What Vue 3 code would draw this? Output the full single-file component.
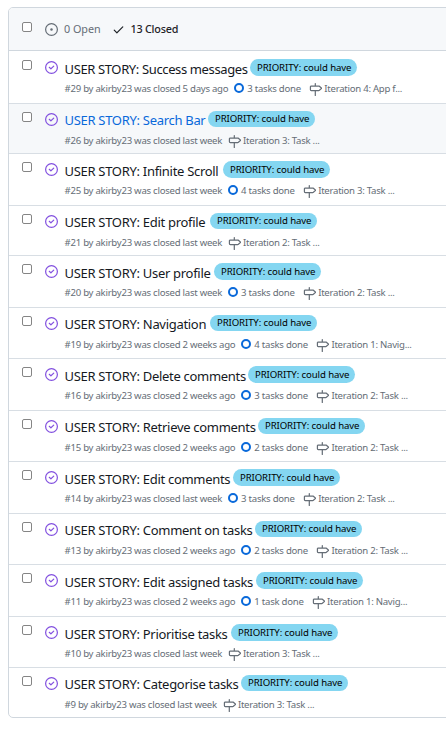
<script setup>
const mk = (id, title, titleWidth, when, tasks, iteration, height, pad) => ({ id, title, titleWidth, when, tasks, iteration, height, pad })
const issues = [
  mk(29, 'Success messages', 185.5, '5 days ago', '3 tasks', '4: App f...', 53, 2),
  mk(26, 'Search Bar', 143.5, 'last week', '', '3: Task ...', 50, 0),
  mk(25, 'Infinite Scroll', 158.5, 'last week', '4 tasks', '3: Task ...', 52, 1),
  mk(21, 'Edit profile', 145.5, 'last week', '', '2: Task ...', 50, 0),
  mk(20, 'User profile', 149.5, 'last week', '3 tasks', '2: Task ...', 52, 1),
  mk(19, 'Navigation', 145.5, '2 weeks ago', '4 tasks', '1: Navig...', 51, 0),
  mk(16, 'Delete comments', 183.5, '2 weeks ago', '3 tasks', '2: Task ...', 52, 1),
  mk(15, 'Retrieve comments', 193.5, '2 weeks ago', '2 tasks', '2: Task ...', 51, 0),
  mk(14, 'Edit comments', 168.5, 'last week', '3 tasks', '2: Task ...', 52, 1),
  mk(13, 'Comment on tasks', 190.5, '2 weeks ago', '2 tasks', '2: Task ...', 51, 0),
  mk(11, 'Edit assigned tasks', 191.5, '2 weeks ago', '1 task', '1: Navig...', 52, 1),
  mk(10, 'Prioritise tasks', 166.5, 'last week', '', '3: Task ...', 51, 1),
  mk(9, 'Categorise tasks', 176.5, 'last week', '', '3: Task ...', 50, 0),
]
</script>

<template>
  <main class="list">
    <header class="head">
      <span class="box"></span>
      <svg class="state" viewBox="0 0 16 16" fill="#656d76"><path d="M8 9.5a1.5 1.5 0 1 0 0-3 1.5 1.5 0 0 0 0 3Z"/><path d="M8 0a8 8 0 1 1 0 16A8 8 0 0 1 8 0ZM1.5 8a6.5 6.5 0 1 0 13 0 6.5 6.5 0 0 0-13 0Z"/></svg>
      <span class="open">0 Open</span>
      <svg class="check" viewBox="0 0 16 16" fill="#1f2328"><path d="M13.78 4.22a.75.75 0 0 1 0 1.06l-7.25 7.25a.75.75 0 0 1-1.06 0L2.22 9.28a.75.75 0 0 1 1.06-1.06L6 10.94l6.72-6.72a.75.75 0 0 1 1.06 0Z"/></svg>
      <span class="closed">13 Closed</span>
    </header>
    <section v-for="(i, n) in issues" :key="i.id" class="row" :class="{ hover: n === 1, tight: i.pad === 0 }" :style="{ height: i.height + 'px' }">
      <span class="box"></span>
      <svg class="state" viewBox="0 0 16 16" fill="#8250df"><path d="M11.28 6.78a.75.75 0 0 0-1.06-1.06L7.25 8.69 5.78 7.22a.75.75 0 0 0-1.06 1.06l2 2a.75.75 0 0 0 1.06 0l3.5-3.5Z"/><path d="M16 8A8 8 0 1 1 0 8a8 8 0 0 1 16 0Zm-1.5 0a6.5 6.5 0 1 0-13 0 6.5 6.5 0 0 0 13 0Z"/></svg>
      <div class="body" :style="{ paddingTop: i.pad + 'px' }">
        <div class="top">
          <span class="title" :style="{ width: i.titleWidth + 'px' }">USER STORY: {{ i.title }}</span>
          <span class="label">PRIORITY: could have</span>
        </div>
        <div class="meta">
          <span>#{{ i.id }} by akirby23 was closed {{ i.when }}</span>
          <span v-if="i.tasks" class="tasks"><i class="ring"></i>{{ i.tasks }} done</span>
          <span class="iter"><svg class="sign" viewBox="0 0 16 16" fill="#656d76"><path d="M7.75 0a.75.75 0 0 1 .75.75V3h3.634c.414 0 .814.147 1.13.414l2.07 1.75a1.75 1.75 0 0 1 0 2.672l-2.07 1.75a1.75 1.75 0 0 1-1.13.414H8.5v5.25a.75.75 0 0 1-1.5 0V10H2.75A1.75 1.75 0 0 1 1 8.25v-3.5C1 3.784 1.784 3 2.75 3H7V.75A.75.75 0 0 1 7.75 0Zm4.384 8.5a.25.25 0 0 0 .161-.06l2.07-1.75a.248.248 0 0 0 0-.38l-2.07-1.75a.25.25 0 0 0-.161-.06H2.75a.25.25 0 0 0-.25.25v3.5c0 .138.112.25.25.25h9.384Z"/></svg>Iteration {{ i.iteration }}</span>
        </div>
      </div>
    </section>
  </main>
</template>

<style>
body { background: #fff; overflow: hidden; }
</style>
<style scoped>
.list {
  box-sizing: border-box;
  width: 450px;
  height: 711px;
  margin: 7px 0 0 8px;
  border: 1px solid #d0d7de;
  border-radius: 5px;
  overflow: hidden;
  font-family: "Noto Sans", sans-serif;
  color: #1f2328;
}
.head { height: 42px; background: #f6f8fa; display: flex; align-items: center; font-size: 10.8px; white-space: nowrap; }
.box { box-sizing: border-box; width: 10px; height: 10px; border: 1px solid #858585; border-radius: 2px; background: #fff; margin-left: 13px; flex: none; }
.state { width: 13px; height: 13px; margin-left: 13px; flex: none; }
.head .box { margin-bottom: 4px; }
.open, .closed { margin: 0 0 1px 6px; }
.open { color: #656d76; width: 48px; letter-spacing: -0.03px; }
.check { width: 13px; height: 13px; }
.closed { margin-left: 5.5px; font-weight: 500; letter-spacing: -0.23px; }
.row { box-sizing: border-box; border-top: 1px solid #d8dee4; display: flex; }
.head + .row { border-color: #d0d7de; }
.row .box { margin-top: 8px; }
.head + .row .box { margin-top: 9px; }
.row .state { margin-top: 9px; }
.head + .row .state { margin-top: 10px; }
.hover { background: #f6f8fa; }
.body { margin-left: 6.5px; white-space: nowrap; }
.top { display: flex; height: 29px; }
.title { font-size: 13px; font-weight: 400; line-height: 18px; margin-top: 7px; letter-spacing: -0.3px; color: #15191e; }
.head + .row .title { letter-spacing: -0.37px; }
.hover .title { color: #0969da; }
.label { box-sizing: border-box; height: 17px; width: 107px; margin: 6px 0 0; padding: 0 7px; border-radius: 9px; background: #84d6f1; color: #000; font-size: 9.6px; line-height: 17px; letter-spacing: -0.1px; }
.tight .label { height: 16px; margin-top: 7px; line-height: 16px; }
.meta { display: flex; height: 14px; line-height: 14px; font-size: 9.6px; color: #656d76; letter-spacing: -0.26px; }
.tight .meta { margin-top: 1px; }
.tasks, .iter { display: flex; margin-left: 6px; }
.tasks + .iter { margin-left: 8.5px; }
.ring { box-sizing: border-box; width: 10px; height: 10px; border: 2px solid #0969da; border-radius: 50%; margin: 1px 3px 0 0; }
.sign { width: 13px; height: 13px; margin: 1px 2px 0 0; }
</style>
